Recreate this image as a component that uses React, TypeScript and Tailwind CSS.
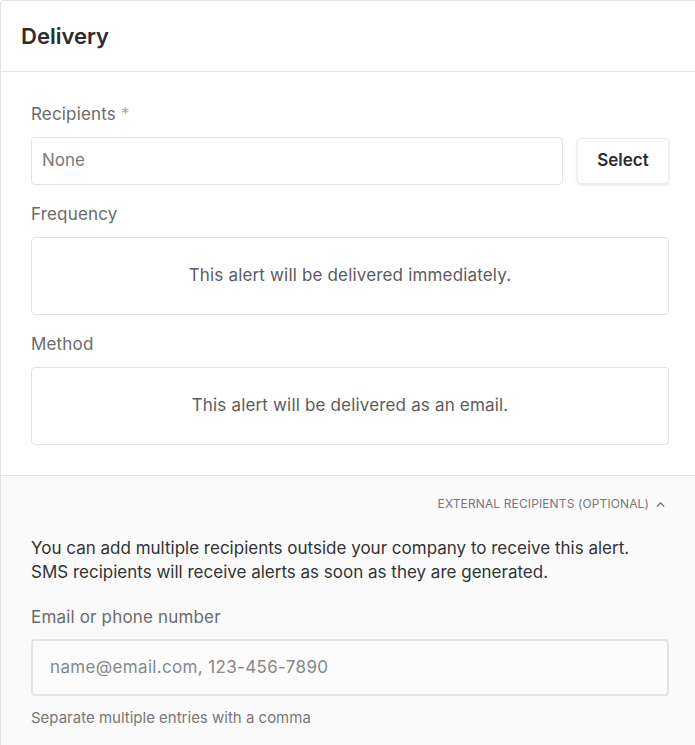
import { ChevronUp } from 'lucide-react';

const font = { fontFamily: 'Inter, "Noto Sans", sans-serif' };

function Field({ label, children }: { label: React.ReactNode; children: React.ReactNode }) {
  return (
    <div>
      <div className="text-[17px] leading-6 tracking-[0.01em] text-[#6b6b6b]">{label}</div>
      <div className="mt-[11px]">{children}</div>
    </div>
  );
}

function InfoBox({ text }: { text: string }) {
  return (
    <div className="flex h-[78px] items-center justify-center rounded border border-[#e3e3e3] bg-white text-[17px] tracking-[0.01em] text-[#5c5c5c]">
      {text}
    </div>
  );
}

export default function App() {
  return (
    <div className="h-[745px] w-full overflow-hidden bg-white" style={font}>
      <div className="w-[699px] rounded-tl border-l border-t border-[#e3e3e3] bg-white">
        <div className="flex h-[71px] items-center border-b border-[#e3e3e3] px-5">
          <h2 className="text-[22px] font-semibold text-[#2d2d2d]">Delivery</h2>
        </div>

        <div className="flex flex-col gap-[17px] px-[30px] pt-[30px] pb-[30px]">
          <Field
            label={
              <>
                Recipients <span className="text-[#aaa]">*</span>
              </>
            }
          >
            <div className="flex items-center gap-[14px]">
              <div className="flex h-[48px] flex-1 items-center rounded border border-[#e3e3e3] px-[10px] text-[17px] text-[#7a7a7a]">
                None
              </div>
              <button className="h-[46px] w-[92px] rounded border border-[#ececec] bg-white text-[17px] font-semibold text-[#2d2d2d] shadow-[0_1px_3px_rgba(0,0,0,0.12)]">
                Select
              </button>
            </div>
          </Field>
          <Field label="Frequency">
            <InfoBox text="This alert will be delivered immediately." />
          </Field>
          <Field label="Method">
            <InfoBox text="This alert will be delivered as an email." />
          </Field>
        </div>

        <div className="border-t border-[#e3e3e3] bg-[#fafafa] px-[30px] pt-[20px] pb-8">
          <div className="flex items-center justify-end gap-[5px] pr-[2px] text-xs tracking-[0.01em] text-[#777]">
            <span>EXTERNAL RECIPIENTS (OPTIONAL)</span>
            <ChevronUp className="h-[13px] w-[13px] text-[#667]" strokeWidth={2.5} />
          </div>
          <p className="mt-[24px] text-[17px] leading-6 text-[#333]">
            You can add multiple recipients outside your company to receive this alert.
            <br />
            SMS recipients will receive alerts as soon as they are generated.
          </p>
          <div className="mt-[21px] text-[17px] leading-6 tracking-[0.01em] text-[#6b6b6b]">Email or phone number</div>
          <div className="mt-[10px] flex h-[57px] items-center rounded border-2 border-[#e3e3e3] bg-[#fcfcfc] px-[17px] text-[17px] tracking-[0.02em] text-[#888]">
            name@email.com, 123-456-7890
          </div>
          <div className="mt-[11px] text-[15px] text-[#777]">Separate multiple entries with a comma</div>
        </div>
      </div>
    </div>
  );
}
